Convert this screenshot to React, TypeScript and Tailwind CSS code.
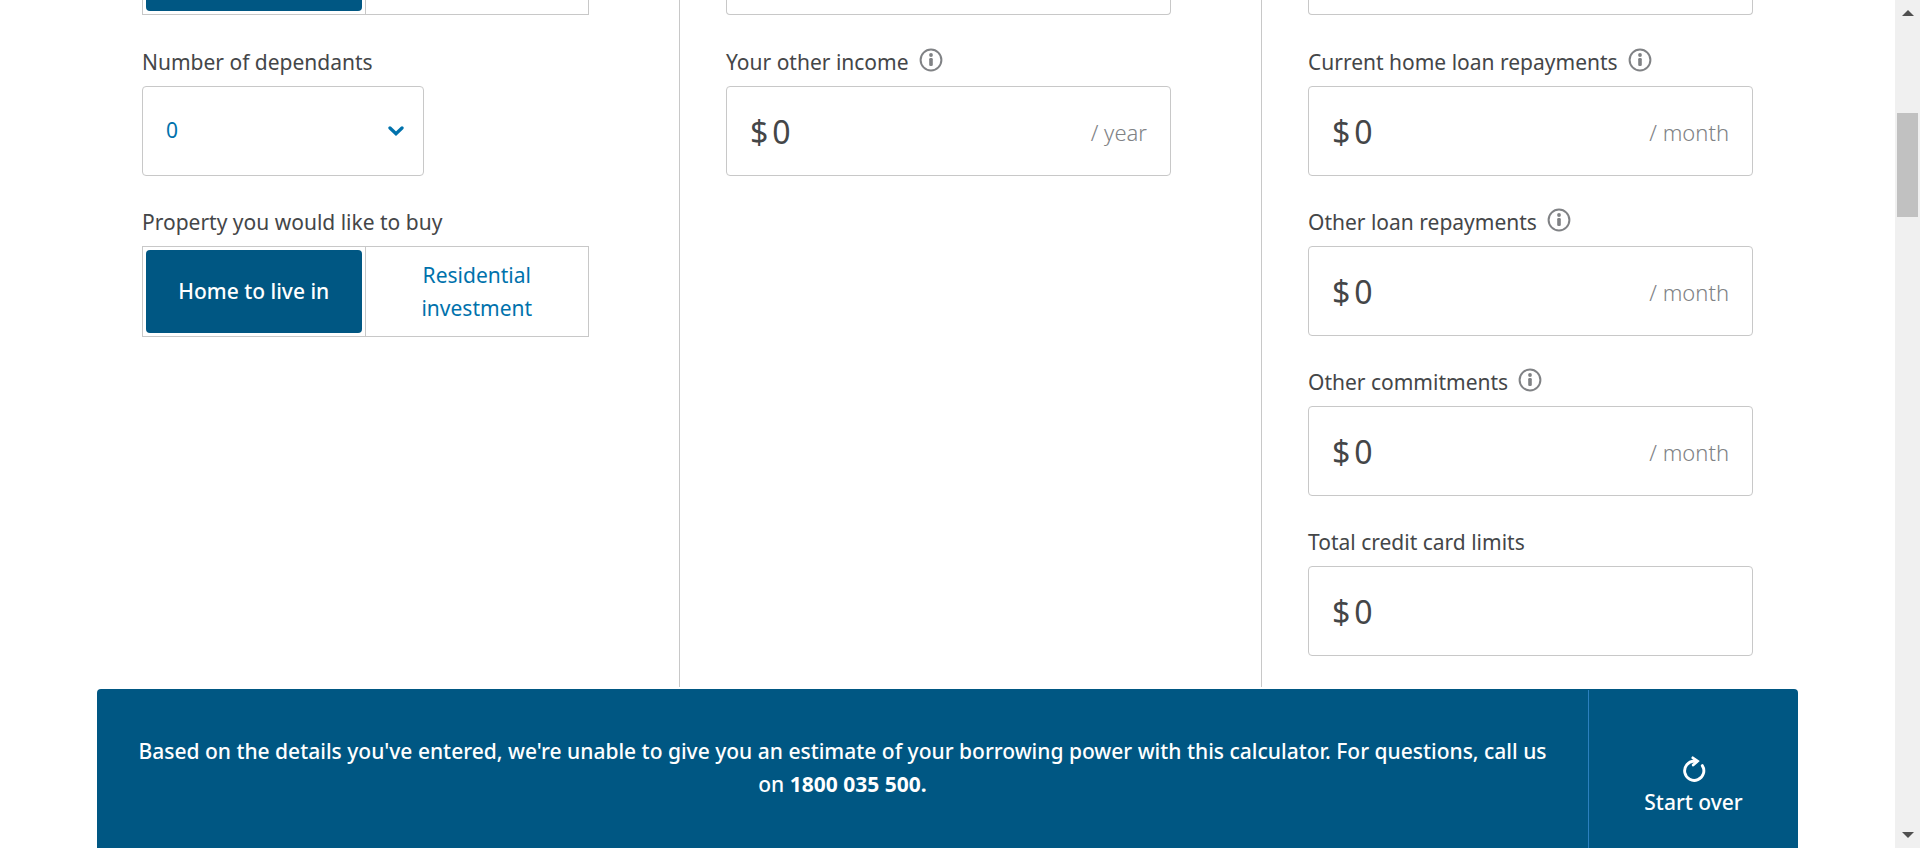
import { useId, useState, type ReactNode } from 'react';

function InfoIcon() {
  return (
    <svg viewBox="0 0 24 24" className="size-6" fill="none" aria-hidden="true">
      <circle cx="12" cy="12" r="10.4" stroke="#808285" strokeWidth="2" />
      <circle cx="12" cy="7" r="1.9" fill="#808285" />
      <rect x="10.2" y="10" width="3.6" height="8" rx="1.3" fill="#808285" />
    </svg>
  );
}

function RestartIcon() {
  return (
    <svg viewBox="0 0 24 26" className="h-[26px] w-6" fill="none" stroke="#fff" aria-hidden="true">
      <path d="M20.3 9.6A9.6 9.6 0 1 1 12 5.2H14.5" strokeWidth="2.9" strokeLinecap="round" />
      <path d="M10.8 1.8L15.6 5.2L11.2 9" strokeWidth="2.7" strokeLinecap="round" strokeLinejoin="miter" />
    </svg>
  );
}

function Chevron() {
  return (
    <svg viewBox="0 0 16 10" className="pointer-events-none mr-[19px] h-[10px] w-4" fill="none" aria-hidden="true">
      <path d="M2 2L8 7.7L14 2" stroke="#0072ac" strokeWidth="3.3" strokeLinecap="round" />
    </svg>
  );
}

function Field({ label, htmlFor, info, children }: { label: string; htmlFor?: string; info?: boolean; children: ReactNode }) {
  return (
    <div className="flex flex-col">
      <div className="flex h-[70px] items-end gap-[10px] pb-2">
        <label htmlFor={htmlFor} className="leading-8">
          {label}
        </label>
        {info && (
          <button type="button" aria-label={`About ${label}`} className="mb-[6px]">
            <InfoIcon />
          </button>
        )}
      </div>
      {children}
    </div>
  );
}

function MoneyField({ label, unit, info }: { label: string; unit?: string; info?: boolean }) {
  const id = useId();
  const [value, setValue] = useState('0');
  return (
    <Field label={label} htmlFor={id} info={info}>
      <div className="flex h-[90px] items-center rounded border border-[#c8c8c8] px-[23px] pt-[2px]">
        <span className="text-[32px]">$</span>
        <input
          id={id}
          value={value}
          onChange={(e) => setValue(e.target.value)}
          className="ml-1 w-full min-w-0 flex-1 text-[32px] outline-none"
        />
        {unit && <span className="text-[22px] font-light whitespace-nowrap text-[#808285]">/ {unit}</span>}
      </div>
    </Field>
  );
}

const purposes = ['Home to live in', 'Residential investment'];

function PurposePicker() {
  const [selected, setSelected] = useState(purposes[0]);
  return (
    <div className="grid min-h-[91px] grid-cols-2 divide-x divide-[#c8c8c8] border border-[#c8c8c8]">
      {purposes.map((purpose) => (
        <div key={purpose} className="flex p-[3px]">
          <button
            type="button"
            aria-pressed={selected === purpose}
            onClick={() => setSelected(purpose)}
            className={
              selected === purpose
                ? 'flex-1 rounded bg-[#005783] px-6 leading-[33px] font-medium text-white'
                : 'flex-1 rounded px-6 leading-[33px] text-[#0072ac]'
            }
          >
            {purpose}
          </button>
        </div>
      ))}
    </div>
  );
}

function ClippedBox() {
  return <div className="mb-px h-[15px] rounded-b border border-t-0 border-[#c8c8c8]" />;
}

function ScrollRail() {
  return (
    <div className="flex w-[25px] shrink-0 flex-col items-center justify-between bg-[#f0f0f0] py-[10px]" aria-hidden="true">
      <div className="flex w-full flex-col items-center">
        <svg viewBox="0 0 12 6" className="h-[6px] w-3">
          <path d="M0 6L6 0L12 6Z" fill="#505050" />
        </svg>
        <div className="mt-[97px] h-[104px] w-[21px] bg-[#c1c1c1]" />
      </div>
      <svg viewBox="0 0 12 6" className="h-[6px] w-3">
        <path d="M0 0L6 6L12 0Z" fill="#505050" />
      </svg>
    </div>
  );
}

export default function App() {
  return (
    <div className="flex h-screen overflow-hidden bg-white font-['Noto_Sans',sans-serif] text-[21px] text-[#444648]">
      <div className="flex min-w-0 flex-1 flex-col px-[97px]">
        <main className="grid min-h-0 flex-1 grid-cols-[538fr_582fr_491fr] overflow-hidden px-[45px] pb-[2px]">
          <section className="border-r border-[#c8c8c8] pr-[90px]">
            <div className="mb-px grid h-[15px] grid-cols-2 divide-x divide-[#c8c8c8] border border-t-0 border-[#c8c8c8]">
              <div className="px-[3px] pb-[3px]">
                <div className="h-full rounded-b bg-[#005783]" />
              </div>
              <div />
            </div>
            <Field label="Number of dependants" htmlFor="dependants">
              <div className="flex h-[90px] w-[282px] items-center rounded border border-[#c8c8c8]">
                <select id="dependants" className="h-full flex-1 appearance-none pl-[23px] text-[#0072ac] outline-none">
                  <option>0</option>
                  <option>1</option>
                  <option>2</option>
                  <option>3</option>
                </select>
                <Chevron />
              </div>
            </Field>
            <Field label="Property you would like to buy">
              <PurposePicker />
            </Field>
          </section>

          <section className="border-r border-[#c8c8c8] pr-[90px] pl-[46px]">
            <ClippedBox />
            <MoneyField label="Your other income" unit="year" info />
          </section>

          <section className="pl-[46px]">
            <ClippedBox />
            <MoneyField label="Current home loan repayments" unit="month" info />
            <MoneyField label="Other loan repayments" unit="month" info />
            <MoneyField label="Other commitments" unit="month" info />
            <MoneyField label="Total credit card limits" />
          </section>
        </main>

        <footer className="flex h-[159px] shrink-0 rounded-t bg-[#005783] font-medium text-white">
          <p className="flex-1 px-10 pt-[46px] text-center leading-[33px]">
            Based on the details you've entered, we're unable to give you an estimate of your borrowing power with this
            calculator. For questions, call us on{' '}
            <a href="tel:1800035500" className="font-bold">
              1800 035 500.
            </a>
          </p>
          <button
            type="button"
            className="mt-px flex w-[210px] shrink-0 flex-col items-center border-l border-[#2b80bf] pt-[66px]"
          >
            <RestartIcon />
            <span className="leading-[40px]">Start over</span>
          </button>
        </footer>
      </div>
      <ScrollRail />
    </div>
  );
}
